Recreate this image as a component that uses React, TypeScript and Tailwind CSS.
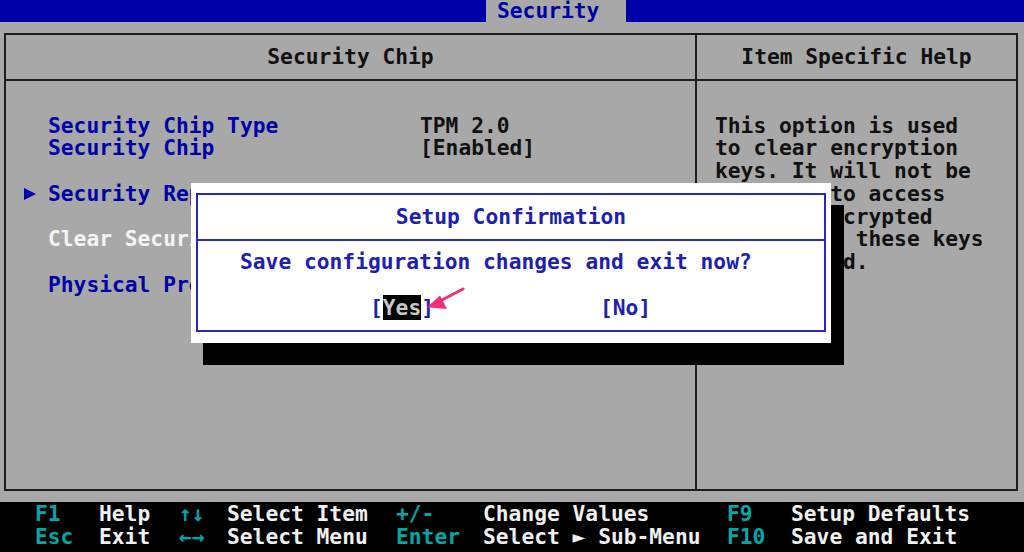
import React from "react";

const mono = "font-['DejaVu_Sans_Mono','Liberation_Mono',monospace] font-bold";

type Row = { label?: string; value?: string; color?: string; active?: boolean };

const rows: Row[] = [
  { label: "Security Chip Type", value: "TPM 2.0", color: "text-[#0000a8]" },
  { label: "Security Chip", value: "[Enabled]", color: "text-[#0000a8]" },
  {},
  { label: "Security Reporting Options", color: "text-[#0000a8]", active: true },
  {},
  { label: "Clear Security Chip", color: "text-[#f4f4f4]" },
  {},
  { label: "Physical Presence for Clear", color: "text-[#0000a8]" },
];

const help = [
  "This option is used",
  "to clear encryption",
  "keys. It will not be",
  "possible to access",
  "already encrypted",
  "data after these keys",
  "are cleared.",
];

const Pointer = () => (
  <svg width="12" height="12" viewBox="0 0 12 12">
    <polygon points="0,0 12,6 0,12" fill="#0000a8" />
  </svg>
);

const Footer = () => {
  const teal = "text-[#00a8a8]";
  const white = "text-[#f0f0f0]";
  const line = (cells: [string, string][]) => (
    <div className="flex h-[22.75px] items-center">
      {cells.map(([t, c], i) => (
        <span
          key={i}
          className={`${c} whitespace-pre ${
            ["w-[64px]", "w-[80px]", "w-[48px]", "w-[169px]", "w-[87px]", "w-[244px]", "w-[64px]", ""][i]
          }`}
        >
          {t}
        </span>
      ))}
    </div>
  );
  return (
    <div className="h-[50px] bg-black pl-[35px] pt-[1px]">
      {line([
        ["F1", teal],
        ["Help", white],
        ["↑↓", teal],
        ["Select Item", white],
        ["+/-", teal],
        ["Change Values", white],
        ["F9", teal],
        ["Setup Defaults", white],
      ])}
      {line([
        ["Esc", teal],
        ["Exit", white],
        ["←→", teal],
        ["Select Menu", white],
        ["Enter", teal],
        ["Select ► Sub-Menu", white],
        ["F10", teal],
        ["Save and Exit", white],
      ])}
    </div>
  );
};

export default function App() {
  return (
    <div
      className={`${mono} relative w-[1024px] h-[552px] overflow-hidden bg-[#a8a8a8] flex flex-col text-[21.25px] leading-[22.75px]`}
    >
      {/* top menu bar */}
      <div className="h-[22px] bg-[#0000a8] flex">
        <div className="ml-[486px] w-[140px] bg-[#a8a8a8] text-[#0000a8] pl-[11px] leading-[22px]">
          Security
        </div>
      </div>

      {/* main frame */}
      <div className="mt-[11px] ml-[4px] w-[1014px] h-[458px] border-2 border-[#1e1e1e] flex">
        <div className="w-[691px] border-r-2 border-[#1e1e1e] flex flex-col">
          <div className="h-[46px] border-b-2 border-[#1e1e1e] flex items-center justify-center text-[#111]">
            Security Chip
          </div>
          <div className="pt-[33.6px]">
            {rows.map((r, i) => (
              <div key={i} className="flex h-[22.75px] items-center">
                <div className="w-[42px] pl-[18px] flex items-center">{r.active && <Pointer />}</div>
                <div className={`w-[372px] whitespace-pre ${r.color ?? ""}`}>{r.label ?? ""}</div>
                <div className="text-[#111] whitespace-pre">{r.value ?? ""}</div>
              </div>
            ))}
          </div>
        </div>
        <div className="flex-1 flex flex-col">
          <div className="h-[46px] border-b-2 border-[#1e1e1e] flex items-center justify-center text-[#111]">
            Item Specific Help
          </div>
          <div className="pt-[33.6px] pl-[18px] text-[#111]">
            {help.map((h, i) => (
              <div key={i} className="h-[22.75px] whitespace-pre">
                {h}
              </div>
            ))}
          </div>
        </div>
      </div>

      <div className="mt-[11px]">
        <Footer />
      </div>

      {/* dialog shadow */}
      <div className="absolute left-[203px] top-[205px] w-[641px] h-[160px] bg-black" />

      {/* setup confirmation dialog */}
      <div className="absolute left-[191px] top-[183px] w-[640px] h-[160px] bg-white pt-[10px] pl-[5px] pr-[5px]">
        <div className="h-[139px] border-2 border-[#2a2ab8] flex flex-col text-[#2020b0]">
          <div className="h-[46px] border-b-2 border-[#2a2ab8] flex items-center justify-center">
            Setup Confirmation
          </div>
          <div className="pt-[10px] pl-[42px] h-[22.75px] box-content whitespace-pre">
            Save configuration changes and exit now?
          </div>
          <div className="mt-[22.75px] pl-[172px] flex h-[22.75px] items-center">
            <span className="whitespace-pre">
              [<span className="bg-black text-[#c8c8c8]">Yes</span>]
            </span>
            <span className="ml-[166px] whitespace-pre">[No]</span>
          </div>
        </div>
      </div>

      {/* pink annotation arrow */}
      <svg
        className="absolute left-[420px] top-[282px]"
        width="50"
        height="34"
        viewBox="0 0 50 34"
      >
        <line x1="43" y1="7" x2="22" y2="18" stroke="#f0307a" strokeWidth="3" strokeLinecap="round" />
        <polygon points="7,25.3 20,13.5 27,27" fill="#f0307a" />
      </svg>
    </div>
  );
}
